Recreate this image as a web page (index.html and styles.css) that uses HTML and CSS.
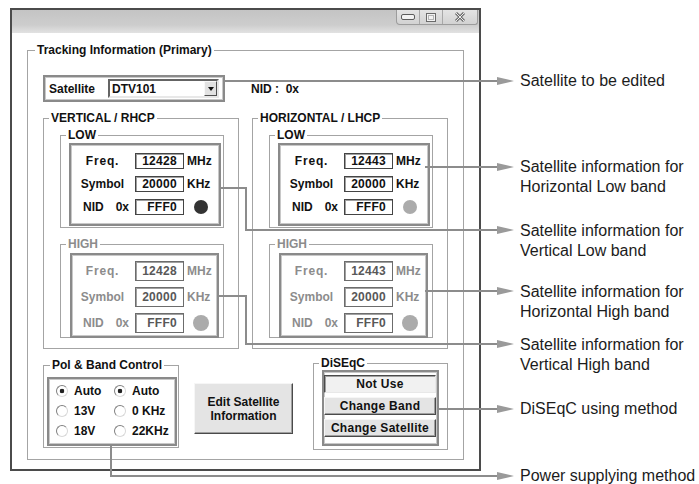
FILE: index.html
```html
<!DOCTYPE html>
<html lang="en">
<head>
    <meta charset="UTF-8">
    <meta name="viewport" content="width=device-width, initial-scale=1.0">
    <title>Tracking Information</title>
    <link rel="stylesheet" href="styles.css">
</head>
<body>
<div class="page">
    <div class="window">
        <div class="titlebar">
            <div class="caption-btns">
                <span class="cap cap-min"><svg width="14" height="6" viewBox="0 0 14 6"><rect x="0.5" y="0.5" width="13" height="5" rx="1.5" fill="#f2f2f2" stroke="#5c5c5c"/></svg></span>
                <span class="cap cap-max"><svg width="10" height="9" viewBox="0 0 10 9"><rect x="0.5" y="0.5" width="9" height="8" fill="#f2f2f2" stroke="#6a6a6a"/><rect x="2.5" y="2.5" width="5" height="4" fill="none" stroke="#b4b4b4"/></svg></span>
                <span class="cap cap-close"><svg width="12" height="10" viewBox="0 0 12 10"><path d="M2 1L10 9M10 1L2 9" stroke="#707070" stroke-width="3"/><path d="M2 1L10 9M10 1L2 9" stroke="#ececec" stroke-width="1"/></svg></span>
            </div>
        </div>
        <div class="client">
            <fieldset class="grp tracking">
                <legend>Tracking Information (Primary)</legend>
                <div class="sat-row">
                    <div class="frame sat-box">
                        <span class="sat-lbl">Satellite</span>
                        <div class="combo"><span class="val">DTV101</span><span class="drop"></span></div>
                    </div>
                    <span class="nid-top">NID :&nbsp; 0x</span>
                </div>
                <div class="cols">
                    <fieldset class="grp side">
                        <legend>VERTICAL / RHCP</legend>
                        <fieldset class="grp band low">
                            <legend>LOW</legend>
                            <div class="frame params">
                                <span class="lbl freq">Freq.</span><span class="field">12428</span><span class="unit">MHz</span>
                                <span class="lbl">Symbol</span><span class="field">20000</span><span class="unit">KHz</span>
                                <span class="lbl nid"><span>NID</span><span>0x</span></span><span class="field">FFF0</span><span class="led on"></span>
                            </div>
                        </fieldset>
                        <fieldset class="grp band high">
                            <legend>HIGH</legend>
                            <div class="frame params">
                                <span class="lbl freq">Freq.</span><span class="field">12428</span><span class="unit">MHz</span>
                                <span class="lbl">Symbol</span><span class="field">20000</span><span class="unit">KHz</span>
                                <span class="lbl nid"><span>NID</span><span>0x</span></span><span class="field">FFF0</span><span class="led"></span>
                            </div>
                        </fieldset>
                    </fieldset>
                    <fieldset class="grp side">
                        <legend>HORIZONTAL / LHCP</legend>
                        <fieldset class="grp band low">
                            <legend>LOW</legend>
                            <div class="frame params">
                                <span class="lbl freq">Freq.</span><span class="field">12443</span><span class="unit">MHz</span>
                                <span class="lbl">Symbol</span><span class="field">20000</span><span class="unit">KHz</span>
                                <span class="lbl nid"><span>NID</span><span>0x</span></span><span class="field">FFF0</span><span class="led"></span>
                            </div>
                        </fieldset>
                        <fieldset class="grp band high">
                            <legend>HIGH</legend>
                            <div class="frame params">
                                <span class="lbl freq">Freq.</span><span class="field">12443</span><span class="unit">MHz</span>
                                <span class="lbl">Symbol</span><span class="field">20000</span><span class="unit">KHz</span>
                                <span class="lbl nid"><span>NID</span><span>0x</span></span><span class="field">FFF0</span><span class="led"></span>
                            </div>
                        </fieldset>
                    </fieldset>
                </div>
                <div class="bottom">
                    <fieldset class="grp pol">
                        <legend>Pol &amp; Band Control</legend>
                        <div class="frame radios">
                            <span class="radio checked">Auto</span><span class="radio checked">Auto</span>
                            <span class="radio">13V</span><span class="radio">0 KHz</span>
                            <span class="radio">18V</span><span class="radio">22KHz</span>
                        </div>
                    </fieldset>
                    <div class="edit-btn">Edit Satellite<br>Information</div>
                    <fieldset class="grp diseqc">
                        <legend>DiSEqC</legend>
                        <div class="frame dsq-frame">
                            <div class="dbtn pressed">Not Use</div>
                            <div class="dbtn">Change Band</div>
                            <div class="dbtn">Change Satellite</div>
                        </div>
                    </fieldset>
                </div>
            </fieldset>
        </div>
    </div>

    <!-- callout lines -->
    <svg class="callouts" width="699" height="484" viewBox="0 0 699 484">
        <g fill="none" stroke="#8c8c8c" stroke-width="2">
            <path d="M225 81H500"/>
            <path d="M425 167H500"/>
            <path d="M221 188H246V230H500"/>
            <path d="M425 291H500"/>
            <path d="M219 296H246V344H500"/>
            <path d="M439 409H500"/>
            <path d="M111 446V476H500"/>
        </g>
        <g fill="#9a9a9a">
            <path d="M497 77L514 81L497 85Z"/>
            <path d="M497 163L514 167L497 171Z"/>
            <path d="M497 226L514 230L497 234Z"/>
            <path d="M497 287L514 291L497 295Z"/>
            <path d="M497 340L514 344L497 348Z"/>
            <path d="M497 405L514 409L497 413Z"/>
            <path d="M497 472L514 476L497 480Z"/>
        </g>
    </svg>
    <div class="note" style="top:71px">Satellite to be edited</div>
    <div class="note" style="top:157px">Satellite information for<br>Horizontal Low band</div>
    <div class="note" style="top:221px">Satellite information for<br>Vertical Low band</div>
    <div class="note" style="top:282px">Satellite information for<br>Horizontal High band</div>
    <div class="note" style="top:335px">Satellite information for<br>Vertical High band</div>
    <div class="note" style="top:399px">DiSEqC using method</div>
    <div class="note" style="top:466px">Power supplying method</div>
</div>
</body>
</html>
```

FILE: styles.css
```css
*{
    margin: 0;
    padding: 0;
    box-sizing: border-box;
}
body{
    width: 699px;
    height: 484px;
    overflow: hidden;
    background: #fff;
    font-family: "Liberation Sans", Arial, sans-serif;
    color: #111;
}
.page{
    position: relative;
    width: 699px;
    height: 484px;
    padding: 8px 0 0 10px;
}

/* window frame */
.window{
    width: 471px;
    height: 463px;
    border: 2px solid #4b4b4b;
    background: #fff;
    display: flex;
    flex-direction: column;
}
.titlebar{
    height: 23px;
    flex: none;
    background: linear-gradient(#c4c4c4, #cdcdcd 65%, #e2e2e2);
    display: flex;
    justify-content: flex-end;
    align-items: flex-start;
}
.caption-btns{
    display: flex;
    height: 15px;
    margin-right: 1px;
    border: 1px solid #9c9c9c;
    border-top: 0;
    border-radius: 0 0 3px 4px;
    background: linear-gradient(#e4e4e4, #d2d2d2);
}
.cap{
    display: flex;
    align-items: center;
    justify-content: center;
}
.cap-min{ width: 23px; border-right: 1px solid #a8a8a8; }
.cap-max{ width: 23px; border-right: 1px solid #a8a8a8; }
.cap-close{ width: 34px; }
.client{
    flex: 1;
    padding: 10px 0 0 15px;
}

/* group boxes */
.grp{
    border: 1px solid #a4a4a4;
    min-width: 0;
}
.grp > legend{
    font-size: 12px;
    font-weight: bold;
    line-height: 14px;
    padding: 0 2px;
}
.frame{
    border: 2px solid #8a8a8a;
    box-shadow: inset 0 0 0 1px #c8c8c8;
}
.tracking{
    width: 437px;
    height: 417px;
    padding: 18px 15px 0 15px;
}
.tracking > legend{ margin-left: -8px; }

/* satellite selector */
.sat-row{
    display: flex;
    align-items: center;
    height: 27px;
}
.sat-box{
    display: flex;
    align-items: center;
    width: 182px;
    height: 27px;
    padding-left: 4px;
    font-size: 12px;
    font-weight: bold;
}
.sat-lbl{ width: 59px; }
.combo{
    display: flex;
    align-items: center;
    width: 111px;
    height: 19px;
    border: 2px solid;
    border-color: #646464 #e8e8e8 #e8e8e8 #646464;
    padding: 0 0 0 2px;
}
.combo .val{ flex: 1; }
.drop{
    width: 13px;
    height: 15px;
    background: #e2e2e2;
    border: 1px solid;
    border-color: #f8f8f8 #505050 #505050 #f8f8f8;
    display: flex;
    align-items: center;
    justify-content: center;
}
.drop::after{
    content: "";
    border-left: 3.5px solid transparent;
    border-right: 3.5px solid transparent;
    border-top: 4px solid #111;
}
.nid-top{
    margin-left: 26px;
    font-size: 12px;
    font-weight: bold;
}

/* polarisation columns */
.cols{
    display: flex;
    gap: 13px;
    margin-top: 9px;
}
.side{
    width: 196px;
    height: 238px;
    padding: 3px 0 0 16px;
}
.side > legend{ margin-left: -11px; }
.band{ width: 164px; }
.low{
    height: 100px;
    padding: 1px 0 0 8px;
}
.low > legend{ margin-left: -3px; }
.high{
    height: 101px;
    margin-top: 9px;
    padding: 2px 0 0 9px;
    color: #8c8c8c;
}
.high > legend{ margin-left: -4px; }
.params{
    display: grid;
    grid-template-columns: 59px 49px auto;
    column-gap: 3px;
    align-items: center;
    font-size: 12px;
    font-weight: bold;
}
.low .params{
    width: 152px;
    height: 83px;
    padding: 8px 0 0 2px;
    grid-auto-rows: 16px;
    row-gap: 7px;
}
.high .params{
    width: 149px;
    height: 85px;
    padding: 6px 0 0 1px;
    grid-auto-rows: 20px;
    row-gap: 6px;
}
.lbl{ text-align: center; }
.freq{ letter-spacing: 0.8px; }
.nid{
    display: flex;
    justify-content: space-between;
    padding: 0 3px 0 10px;
    letter-spacing: 0;
}
.field{
    height: 100%;
    display: flex;
    align-items: center;
    justify-content: flex-end;
    padding-right: 6px;
    border: 1px solid #444;
    box-shadow: inset 1px 1px 0 #a0a0a0;
    letter-spacing: 0.3px;
}
.high .field{
    color: #585858;
    border-color: #6c6c6c;
}
.led{
    width: 14px;
    height: 14px;
    margin-left: 7px;
    border-radius: 50%;
    background: #ababab;
}
.led.on{ background: #333; }
.high .led{
    width: 16px;
    height: 16px;
    margin-left: 6px;
}

/* bottom controls */
.bottom{
    display: flex;
    align-items: flex-start;
    margin-top: 7px;
}
.pol{
    width: 136px;
    height: 90px;
    margin-top: 2px;
    padding: 5px 0 0 3px;
}
.pol > legend{ margin-left: 3px; }
.radios{
    width: 130px;
    height: 69px;
    display: grid;
    grid-template-columns: 58px auto;
    grid-auto-rows: 20px;
    align-items: center;
    padding: 2px 0 0 7px;
    font-size: 12px;
    font-weight: bold;
}
.radio{
    display: flex;
    align-items: center;
    gap: 6px;
}
.radio::before{
    content: "";
    width: 10px;
    height: 10px;
    border-radius: 50%;
    border: 1px solid;
    border-color: #808080 #d8d8d8 #d8d8d8 #808080;
    background: #fff;
}
.radio.checked::before{
    background: radial-gradient(circle, #222 0 2px, #fff 2.6px);
}
.edit-btn{
    width: 99px;
    height: 51px;
    margin: 27px 0 0 15px;
    display: flex;
    align-items: center;
    justify-content: center;
    text-align: center;
    background: #e4e4e4;
    border: 1px solid;
    border-color: #f6f6f6 #4a4a4a #4a4a4a #f6f6f6;
    box-shadow: inset -1px -1px 0 #a0a0a0;
    font-size: 12px;
    font-weight: bold;
    line-height: 14px;
}
.diseqc{
    width: 135px;
    height: 94px;
    margin-left: auto;
    padding: 0 0 0 8px;
}
.diseqc > legend{ margin-left: -3px; }
.dsq-frame{
    width: 117px;
    height: 76px;
    padding: 3px 1px 0 0;
    display: flex;
    flex-direction: column;
    gap: 4px;
}
.dbtn{
    height: 18px;
    display: flex;
    align-items: center;
    justify-content: center;
    background: #e4e4e4;
    border: 1px solid;
    border-color: #f6f6f6 #4a4a4a #4a4a4a #f6f6f6;
    box-shadow: inset -1px -1px 0 #a0a0a0;
    font-size: 12px;
    font-weight: bold;
    letter-spacing: 0.3px;
}
.dbtn.pressed{
    background: #f1f1f1;
    border-color: #4a4a4a #e8e8e8 #e8e8e8 #4a4a4a;
    box-shadow: inset 1px 1px 0 #a0a0a0;
}

/* annotations */
.callouts{
    position: absolute;
    left: 0;
    top: 0;
    pointer-events: none;
}
.note{
    position: absolute;
    left: 520px;
    font-size: 16px;
    line-height: 20px;
    color: #1c1c1c;
    white-space: nowrap;
}
```
